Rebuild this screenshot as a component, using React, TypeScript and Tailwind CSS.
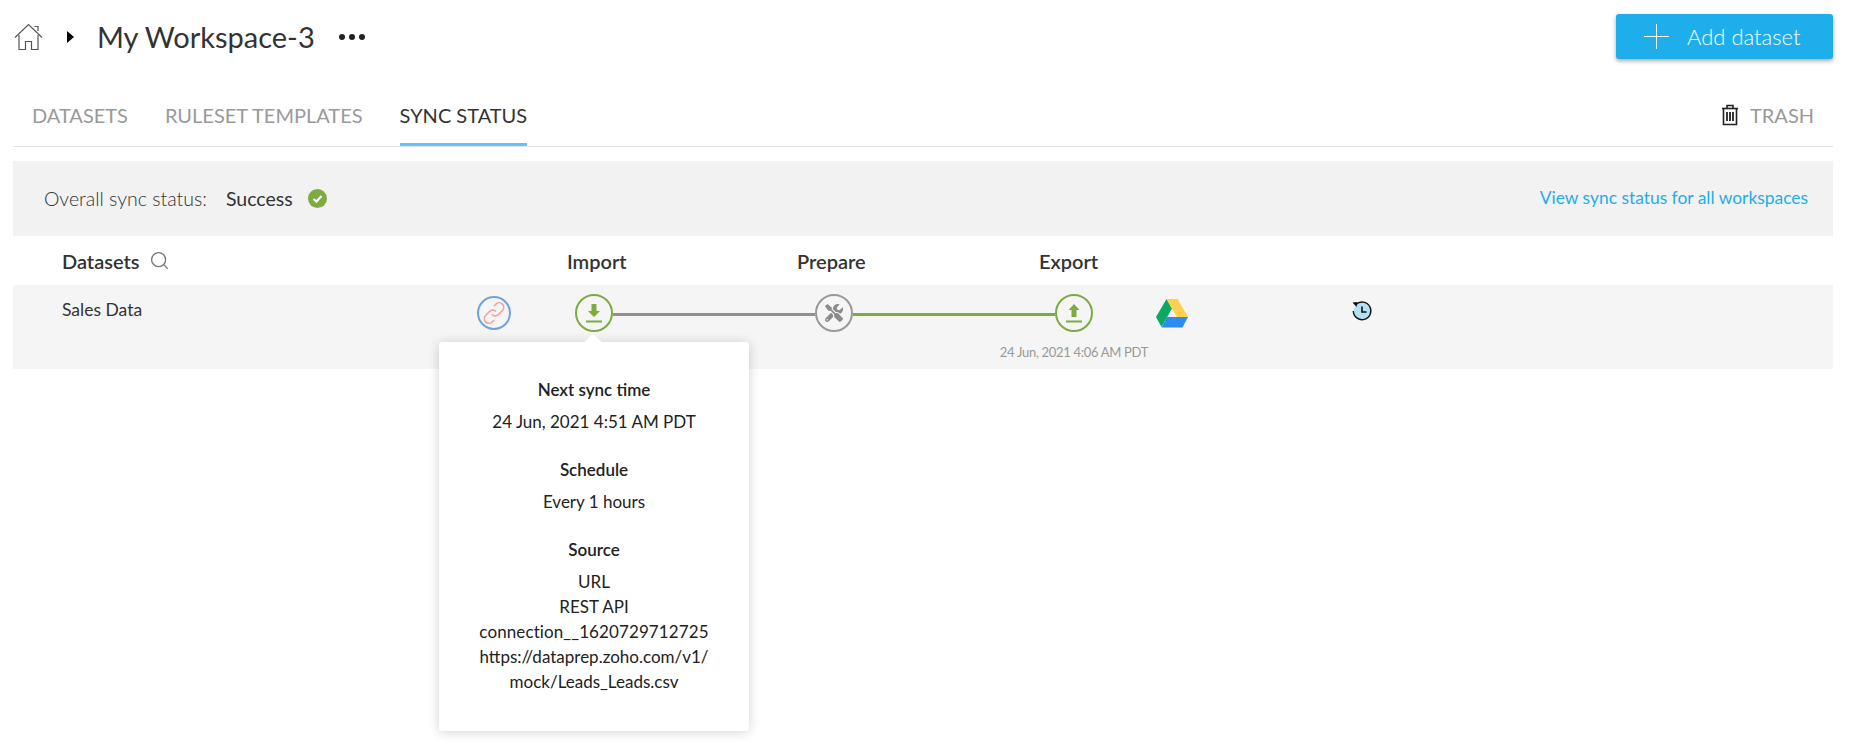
import { Search } from 'lucide-react'
import { FaTools } from 'react-icons/fa'

const POPOVER_SECTIONS = [
  { title: 'Next sync time', lines: ['24 Jun, 2021 4:51 AM PDT'] },
  { title: 'Schedule', lines: ['Every 1 hours'] },
  {
    title: 'Source',
    lines: ['URL', 'REST API', 'connection__1620729712725', 'https://dataprep.zoho.com/v1/', 'mock/Leads_Leads.csv'],
  },
]

function HomeIcon() {
  return (
    <svg width="29" height="28" viewBox="0 0 29 28" fill="none" stroke="#555" strokeWidth="1.2">
      <path d="M1 14.5 14.5 1.5 28 14.5" />
      <path d="M20.5 3.5h3.5v4.5" />
      <path d="M5 12v14.5h6.5v-8h6v8H24V12" />
    </svg>
  )
}

function TrashIcon() {
  return (
    <svg width="18" height="22" viewBox="0 0 18 22" fill="none" stroke="#222" strokeWidth="1.6">
      <path d="M1 4.5h16" />
      <path d="M6 4V1.5h6V4" />
      <path d="M2.5 4.5V20.5h13V4.5" />
      <path d="M6 8v9M9 8v9M12 8v9" strokeWidth="1.8" />
    </svg>
  )
}

function DownloadGlyph() {
  return (
    <svg width="16" height="20" viewBox="0 0 16 20" fill="#7cab3f">
      <path d="M5.500 1h5v7H14l-6 6-6-6h3.500z" />
      <rect x="0" y="17.500" width="16" height="2" />
    </svg>
  )
}

function UploadGlyph() {
  return (
    <svg width="16" height="20" viewBox="0 0 16 20" fill="#7cab3f">
      <path d="M8 1l5.500 6H10.500v7h-5V7H2.500z" />
      <rect x="0" y="17.500" width="16" height="2" />
    </svg>
  )
}

function DriveIcon() {
  return (
    <svg width="32" height="29" viewBox="0 0 32 29">
      <path d="M10.500 0 0 18l5.500 10L16 9.500z" fill="#0da960" />
      <path d="M10.500 0h11L32 18H21z" fill="#ffd04b" />
      <path d="M11 18h21l-5.500 10.500H5.500z" fill="#2d8cf0" />
    </svg>
  )
}

function HistoryIcon() {
  return (
    <svg width="22" height="22" viewBox="0 0 22 22" fill="#b3e0f7" stroke="#111" strokeWidth="1.400">
      <path d="M5 4.500A8.800 8.800 0 1 1 2.300 11" />
      <path d="M1.500 2.500 6.500 2 5.500 7z" fill="#111" stroke="none" />
      <path d="M11 6.500V12h4.500" fill="none" strokeWidth="1.600" />
    </svg>
  )
}

function LinkIcon() {
  return (
    <svg width="24" height="24" viewBox="0 0 24 24" fill="none" stroke="#f29d9d" strokeWidth="1.500">
      <path d="M10 13.500a4.500 4.500 0 0 0 6.500 0l4-4a4.600 4.600 0 0 0-6.500-6.500l-2 2" />
      <path d="M14 10.500a4.500 4.500 0 0 0-6.500 0l-4 4a4.600 4.600 0 0 0 6.500 6.500l2-2" />
    </svg>
  )
}

export default function App() {
  return (
    <div className="h-[744px] w-[1860px] overflow-hidden bg-white pl-[13px] pr-[27px] font-['Lato',sans-serif] text-[#222]">
      {/* top bar */}
      <div className="flex h-[73px] items-start justify-between pt-[14px]">
        <div className="flex items-center pl-[1px] pt-[7px]">
          <HomeIcon />
          <span className="ml-[24px] h-0 w-0 border-y-[6px] border-l-[7px] border-y-transparent border-l-black" />
          <span className="ml-[23px] text-[29px] leading-[32px] text-[#333]">My Workspace-3</span>
          <span className="ml-[24px] flex gap-[4px]">
            <span className="h-[6px] w-[6px] rounded-full bg-[#222]" />
            <span className="h-[6px] w-[6px] rounded-full bg-[#222]" />
            <span className="h-[6px] w-[6px] rounded-full bg-[#222]" />
          </span>
        </div>
        <button className="flex h-[45px] w-[217px] items-center rounded-[3px] bg-[#1eaeeb] pl-[28px] text-white shadow-[0_2px_4px_rgba(0,0,0,0.35)]">
          <svg width="25" height="25" viewBox="0 0 25 25" stroke="#fff" strokeWidth="1">
            <path d="M12.500 0v25M0 12.500h25" />
          </svg>
          <span className="ml-[18px] text-[22px] font-light">Add dataset</span>
        </button>
      </div>

      {/* tabs */}
      <div className="flex h-[74px] items-end justify-between border-b border-[#e2e2e2] pl-[19px] text-[20px] leading-[24px]">
        <div className="flex gap-[37px]">
          <span className="pb-[19px] text-[#999]">DATASETS</span>
          <span className="pb-[19px] text-[#999]">RULESET TEMPLATES</span>
          <span className="relative pb-[19px] text-[#333]">
            SYNC STATUS
            <span className="absolute inset-x-0 bottom-0 h-[3px] bg-[#5ac6fb]" />
          </span>
        </div>
        <div className="flex items-center gap-[11px] pb-[19px] pr-[19px]">
          <TrashIcon />
          <span className="text-[#999]">TRASH</span>
        </div>
      </div>

      {/* overall status */}
      <div className="mt-[14px] flex h-[75px] items-center justify-between bg-[#f2f2f2] pl-[31px] pr-[25px] text-[19.5px]">
        <div className="flex items-center">
          <span className="font-light text-[#333]">Overall sync status:</span>
          <span className="ml-[19px] text-[#333]">Success</span>
          <svg className="ml-[15px]" width="19" height="19" viewBox="0 0 19 19">
            <circle cx="9.500" cy="9.500" r="9.500" fill="#7cab3f" />
            <path d="M5.500 10l3 2.500 5-5.500" fill="none" stroke="#fff" strokeWidth="2.200" />
          </svg>
        </div>
        <a className="text-[17.4px] text-[#1eaeeb]">View sync status for all workspaces</a>
      </div>

      {/* column headers */}
      <div className="flex h-[49px] items-center pl-[49px] text-[20px] font-semibold text-[#333]">
        <span className="flex w-[505px] items-center gap-[9px]">
          Datasets
          <Search size={21} strokeWidth={1.5} className="text-[#777]" />
        </span>
        <span className="w-[230px]">Import</span>
        <span className="w-[242px]">Prepare</span>
        <span>Export</span>
      </div>

      {/* dataset row */}
      <div className="relative flex h-[84px] items-start bg-[#f5f5f5] pl-[49px]">
        <span className="w-[415px] pt-[12px] text-[17.5px] text-[#333]">Sales Data</span>
        <div className="flex items-center pt-[9px]">
          <span className="flex h-[34px] w-[34px] items-center justify-center rounded-full border-2 border-[#6ba3e0]">
            <LinkIcon />
          </span>
          <span className="ml-[64px] flex h-[38px] w-[38px] items-center justify-center rounded-full border-2 border-[#7cab3f]">
            <DownloadGlyph />
          </span>
          <span className="h-[3px] w-[202px] translate-y-[1px] bg-[#909090]" />
          <span className="flex h-[38px] w-[38px] items-center justify-center rounded-full border-2 border-[#999]">
            <FaTools size={18} className="text-[#8a8a8a]" />
          </span>
          <span className="h-[3px] w-[202px] translate-y-[1px] bg-[#7cab3f]" />
          <span className="relative flex h-[38px] w-[38px] items-center justify-center rounded-full border-2 border-[#7cab3f]">
            <UploadGlyph />
            <span className="absolute left-1/2 top-[47px] -translate-x-1/2 whitespace-nowrap text-[13px] tracking-[-0.3px] text-[#999]">
              24 Jun, 2021 4:06 AM PDT
            </span>
          </span>
          <span className="ml-[63px]">
            <DriveIcon />
          </span>
          <span className="ml-[163px] -translate-y-[2px]">
            <HistoryIcon />
          </span>
        </div>

        {/* sync popover */}
        <div className="absolute left-[426px] top-[57px] z-10 h-[389px] w-[310px] rounded-[3px] bg-white pt-[35px] text-center text-[17px] leading-[25px] text-[#222] shadow-[0_1px_12px_rgba(0,0,0,0.18)]">
          <span className="absolute left-[148px] top-[-6px] h-[12px] w-[12px] rotate-45 bg-white" />
          {POPOVER_SECTIONS.map((section) => (
            <div key={section.title} className="mb-[23px]">
              <div className="mb-[7px] font-semibold">{section.title}</div>
              {section.lines.map((line) => (
                <div key={line} className={line.startsWith('connection') ? 'tracking-[0.1px]' : ''}>
                  {line}
                </div>
              ))}
            </div>
          ))}
        </div>
      </div>
    </div>
  )
}
